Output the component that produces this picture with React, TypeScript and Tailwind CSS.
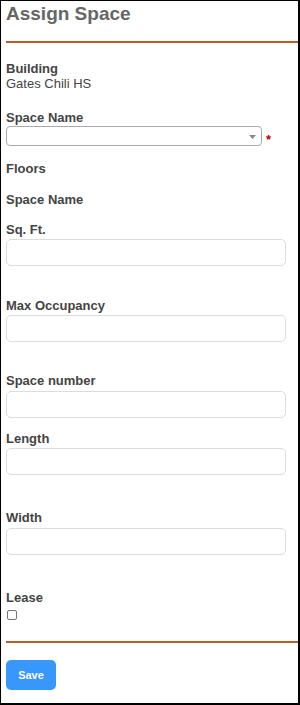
import React from "react";

const font = { fontFamily: '"Liberation Sans", Arial, sans-serif' };

function Label({ children, className = "" }: { children: React.ReactNode; className?: string }) {
  return <div className={`text-[13px] leading-[15px] font-bold text-[#444] ${className}`}>{children}</div>;
}

function Input({ className = "" }: { className?: string }) {
  return (
    <input
      type="text"
      className={`block w-[280px] h-[27px] border border-[#dcdcdc] rounded-[5px] bg-white outline-none ${className}`}
    />
  );
}

export default function App() {
  return (
    <div
      style={font}
      className="w-[300px] h-[705px] bg-white border-l border-t border-black border-r-2 border-b-2 pl-[5px] pt-[1px] box-border overflow-hidden"
    >
      <div className="text-[19px] leading-[24px] font-bold text-[#666]">Assign Space</div>
      <div className="mt-[15px] h-[2px] bg-[#b85c2c]" />

      <Label className="mt-[18px]">Building</Label>
      <div className="text-[13px] leading-[15px] text-[#444]">Gates Chili HS</div>

      <Label className="mt-[19px]">Space Name</Label>
      <div className="mt-[1px] flex items-center">
        <div className="relative w-[256px] h-[20px] border border-[#aaa] rounded-[4px] bg-white">
          <svg className="absolute right-[5px] top-[8px]" width="7" height="4" viewBox="0 0 7 4">
            <path d="M0 0 L7 0 L3.5 4 Z" fill="#888" />
          </svg>
        </div>
        <span className="ml-[4px] mt-[6px] text-[13px] leading-[13px] font-bold text-[#b00000]">*</span>
      </div>

      <Label className="mt-[15px]">Floors</Label>
      <Label className="mt-[16px]">Space Name</Label>

      <Label className="mt-[15px]">Sq. Ft.</Label>
      <Input className="mt-[2px]" />

      <Label className="mt-[32px]">Max Occupancy</Label>
      <Input className="mt-[2px]" />

      <Label className="mt-[31px]">Space number</Label>
      <Input className="mt-[3px]" />

      <Label className="mt-[13px]">Length</Label>
      <Input className="mt-[2px]" />

      <Label className="mt-[35px]">Width</Label>
      <Input className="mt-[3px]" />

      <Label className="mt-[35px]">Lease</Label>
      <input
        type="checkbox"
        className="block mt-[5px] ml-[1px] w-[10px] h-[10px] appearance-none border border-[#777] rounded-[2px] bg-white"
      />

      <div className="mt-[21px] h-[2px] bg-[#b85c2c]" />

      <button className="mt-[17px] w-[50px] h-[30px] rounded-[5px] bg-[#3797fa] text-white text-[11px] font-bold">
        Save
      </button>
    </div>
  );
}
